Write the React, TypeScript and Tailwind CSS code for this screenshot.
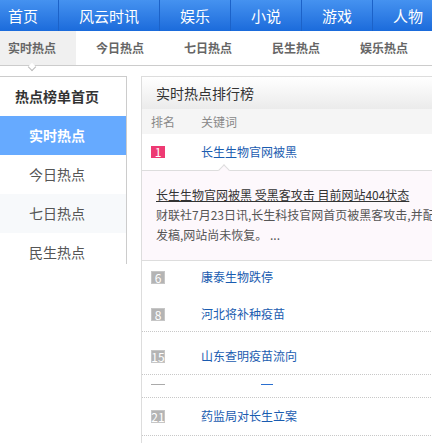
import React from 'react';

const navItems = ['首页', '风云时讯', '娱乐', '小说', '游戏', '人物'];
const tabs = ['实时热点', '今日热点', '七日热点', '民生热点', '娱乐热点'];
const sideItems = ['实时热点', '今日热点', '七日热点', '民生热点'];

function Badge({ n, hot }: { n: number; hot?: boolean }) {
  return (
    <span
      className={`inline-block w-[14px] text-[12px] text-center text-white ${
        hot
          ? 'h-[12px] leading-[12px] bg-[#ee3a73]'
          : 'h-[13px] leading-[13px] bg-[#b4b4b4] shadow-[inset_0_0_0_1px_#c6c6c6]'
      }`}
    >
      {n}
    </span>
  );
}

export default function App() {
  return (
    <div
      className="w-[432px] h-[443px] overflow-hidden bg-white"
      style={{ fontFamily: '"Noto Sans CJK SC", "Noto Sans", sans-serif' }}
    >
      <div className="-ml-[12px] w-[444px]">
        {/* Top nav */}
        <div className="flex h-[31px] bg-gradient-to-b from-[#4592f0] to-[#1b6bdb]">
          {navItems.map((item, i) => (
            <div
              key={item}
              className={`px-5 text-[15px] leading-[31px] text-white shrink-0 ${
                i < navItems.length - 1 ? 'border-r border-[#1c62c8]' : ''
              }`}
            >
              {item}
            </div>
          ))}
        </div>

        {/* Sub tabs */}
        <div className="flex h-[35px] border-b border-[#cccccc]">
          {tabs.map((tab, i) => (
            <div
              key={tab}
              className={`relative px-5 text-[12px] font-bold leading-[34px] text-[#666] shrink-0 ${
                i === 0 ? 'bg-[#f0f0f0]' : ''
              }`}
            >
              {tab}
              {i === 0 && (
                <span className="absolute left-1/2 -bottom-[5px] -ml-[3px] w-[6px] h-[6px] rotate-45 border-r border-b border-[#bbbbbb] bg-white" />
              )}
            </div>
          ))}
        </div>

        {/* Body */}
        <div className="flex mt-[10px] gap-[14px]">
          {/* Sidebar */}
          <div className="w-[139px] h-[188px] overflow-hidden border-t border-r border-[#cccccc] shrink-0">
            <div className="h-[39px] leading-[39px] text-center text-[14px] font-bold text-[#333]">
              热点榜单首页
            </div>
            {sideItems.map((item, i) => (
              <div
                key={item}
                className={`h-[39px] leading-[39px] text-center text-[14px] ${
                  i === 0
                    ? 'bg-[#66aaff] text-white font-bold'
                    : i === 2
                    ? 'bg-[#f7f9fb] text-[#555]'
                    : 'text-[#555]'
                }`}
              >
                {item}
              </div>
            ))}
          </div>

          {/* Main panel */}
          <div className="w-[440px] h-[380px] border-t border-l border-[#dddddd] shrink-0">
            <div className="h-[32px] pl-[14px] leading-[32px] text-[14px] text-[#333] bg-gradient-to-b from-white to-[#ebebeb]">
              实时热点排行榜
            </div>
            <div className="flex h-[25px] items-center bg-[#f5f5f5] text-[12px] text-[#888] pl-[9px]">
              <span className="w-[50px]">排名</span>
              <span>关键词</span>
            </div>

            {/* Row 1 expanded */}
            <div className="flex h-[36px] pt-[8px] pl-[9px] items-start">
              <div className="h-[20px] flex items-center">
                <Badge n={1} hot />
              </div>
              <span className="ml-[36px] text-[12px] leading-[20px] text-[#1a5cb0]">长生生物官网被黑</span>
            </div>
            <div className="relative h-[91px] border-t border-b border-[#dddddd] bg-[#fdf8fc] pt-[14px] px-[14px] text-[12px] leading-[20px]">
              <span className="absolute left-[78px] -top-[5px] w-[8px] h-[8px] rotate-45 border-l border-t border-[#dddddd] bg-[#fdf8fc]" />
              <div className="text-[#333] underline whitespace-nowrap">长生生物官网被黑 受黑客攻击 目前网站404状态</div>
              <div className="text-[#555] whitespace-nowrap">财联社7月23日讯,长生科技官网首页被黑客攻击,并配</div>
              <div className="text-[#555] whitespace-nowrap">发稿,网站尚未恢复。 ...</div>
            </div>

            {/* Row 6 */}
            <div className="flex h-[36px] pt-[6px] pl-[9px] items-start">
              <div className="h-[20px] flex items-center">
                <Badge n={6} />
              </div>
              <span className="ml-[36px] text-[12px] leading-[20px] text-[#1a5cb0]">康泰生物跌停</span>
            </div>
            {/* Row 8 */}
            <div className="flex h-[35px] pt-[7px] pl-[9px] items-start border-b border-dotted border-[#c8c8c8]">
              <div className="h-[20px] flex items-center">
                <Badge n={8} />
              </div>
              <span className="ml-[36px] text-[12px] leading-[20px] text-[#1a5cb0]">河北将补种疫苗</span>
            </div>
            {/* Row 15 */}
            <div className="flex h-[43px] pt-[14px] pl-[9px] items-start border-b border-dotted border-[#c8c8c8]">
              <div className="h-[20px] flex items-center">
                <Badge n={15} />
              </div>
              <span className="ml-[36px] text-[12px] leading-[20px] text-[#1a5cb0]">山东查明疫苗流向</span>
            </div>
            {/* Collapsing row */}
            <div className="flex h-[23px] pt-[9px] pl-[9px] items-start border-b border-dotted border-[#c8c8c8]">
              <span className="w-[14px] h-[1px] bg-[#aaaaaa]" />
              <span className="ml-[96px] w-[12px] h-[1px] bg-[#2a6fd0]" />
            </div>
            {/* Row 21 */}
            <div className="flex h-[38px] pt-[8px] pl-[9px] items-start border-b border-dotted border-[#c8c8c8]">
              <div className="h-[20px] flex items-center">
                <Badge n={21} />
              </div>
              <span className="ml-[36px] text-[12px] leading-[20px] text-[#1a5cb0]">药监局对长生立案</span>
            </div>
          </div>
        </div>
      </div>
    </div>
  );
}
